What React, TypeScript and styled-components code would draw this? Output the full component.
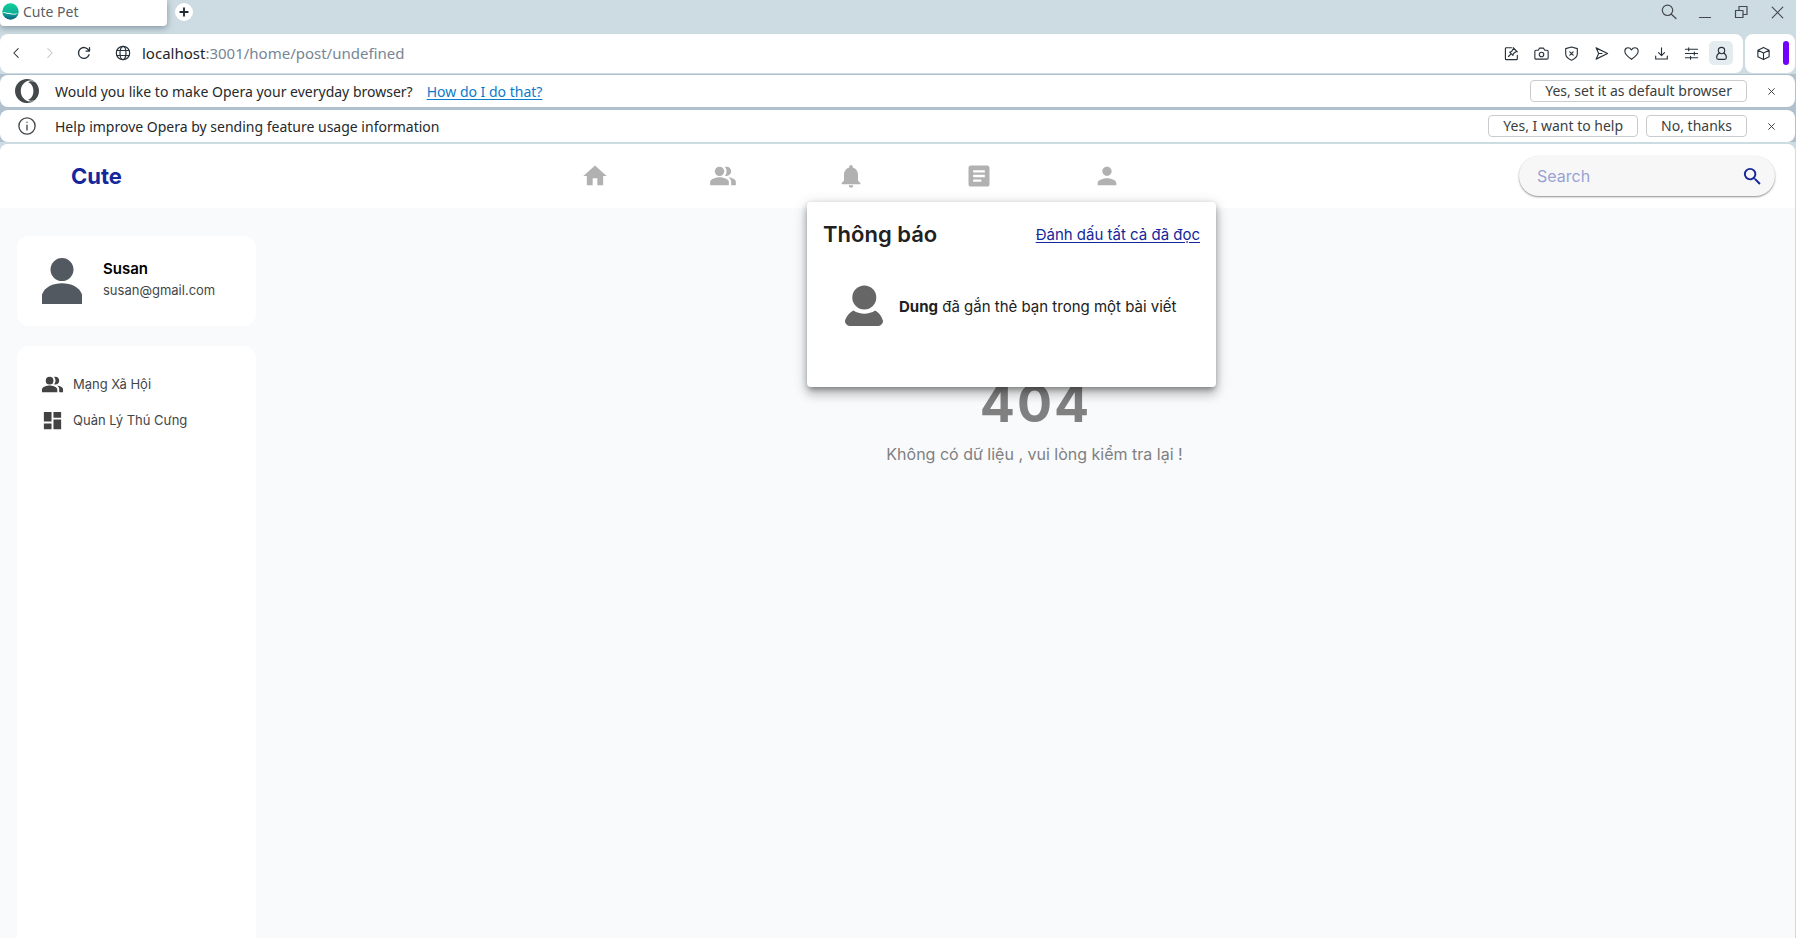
import React from "react";
import styled, { createGlobalStyle, css } from "styled-components";
import {
  MdArticle,
  MdDashboard,
  MdHome,
  MdNotifications,
  MdPeopleAlt,
  MdPerson,
  MdSearch,
} from "react-icons/md";

const chromeFont = `"Noto Sans", "Open Sans", sans-serif`;
const pageFont = `Inter, "Noto Sans", sans-serif`;

const GlobalStyle = createGlobalStyle`
  *, *::before, *::after { box-sizing: border-box; }
  body { margin: 0; background: #cddbe2; }
  button, input { font: inherit; }
  h1, h2, p, ul { margin: 0; padding: 0; }
  ul { list-style: none; }
`;

const Window = styled.div`
  display: flex;
  flex-direction: column;
  min-height: 100vh;
  background: #cddbe2;
  font-family: ${chromeFont};
`;

/* ---------- browser chrome ---------- */

const TabStrip = styled.div`
  display: flex;
  align-items: flex-start;
  height: 34px;
`;

const Tab = styled.div`
  display: flex;
  align-items: center;
  gap: 4px;
  width: 167px;
  height: 26px;
  padding: 0 2px 3px;
  background: #fff;
  border-radius: 0 0 4px 4px;
  box-shadow: 0 2px 6px rgba(60, 80, 95, 0.5);
  color: #5b5f63;
  font-size: 14px;
`;

const NewTab = styled.button`
  display: flex;
  align-items: center;
  justify-content: center;
  width: 18px;
  height: 18px;
  margin: 3px 0 0 8px;
  padding: 0;
  border: 0;
  border-radius: 50%;
  background: #fff;
  color: #202b33;
`;

const WindowControls = styled.div`
  display: flex;
  margin: 0 1px 0 auto;
  height: 24px;
`;

const ControlButton = styled.button`
  display: flex;
  align-items: center;
  justify-content: center;
  width: 36px;
  padding: 0;
  border: 0;
  background: none;
  color: #42484d;
`;

const ToolbarRow = styled.div`
  display: flex;
  gap: 2px;
  padding-right: 1px;
  margin-bottom: 1px;
`;

const Toolbar = styled.div<{ $grow?: boolean }>`
  display: flex;
  align-items: center;
  height: 39px;
  background: #fff;
  border-radius: 8px;
  ${(p) =>
    p.$grow
      ? css`
          flex: 1;
          padding: 0 7px 1px 1px;
        `
      : css`
          gap: 5px;
          padding: 0 6px 1px 3px;
        `}
`;

const ToolButton = styled.button<{ $faded?: boolean; $active?: boolean }>`
  display: flex;
  align-items: center;
  justify-content: center;
  width: ${(p) => (p.$active ? 24 : 30)}px;
  height: 24px;
  margin: ${(p) => (p.$active ? "0 3px" : "0")};
  padding: 0;
  border: 0;
  border-radius: 5px;
  background: ${(p) => (p.$active ? "#e4ecf0" : "none")};
  color: ${(p) => (p.$faded ? "#c3c7ca" : "#27313a")};
`;

const NavButtons = styled.div`
  display: flex;
  gap: 4px;
  padding-right: 9px;
`;

const Address = styled.input`
  width: 100%;
  height: 24px;
  padding: 0;
  border: 0;
  outline: 0;
  background: none;
  color: #768694;
  font-size: 15px;
`;

const AddressBox = styled.label`
  display: flex;
  align-items: center;
  flex: 1;
  min-width: 0;
  font-size: 15px;
  color: #768694;
`;

const Host = styled.span`
  margin-left: 4px;
  color: #1f2529;
`;

const SideHandle = styled.span`
  width: 6px;
  height: 24px;
  border-radius: 3px;
  background: #7300ff;
`;

const InfoBars = styled.div`
  display: flex;
  flex-direction: column;
  gap: 3px;
  padding: 1px 1px 0 0;
  margin-bottom: 2px;
  background: #b0c1cd;
`;

const InfoBar = styled.div`
  display: flex;
  align-items: center;
  gap: 8px;
  height: 32px;
  padding: 0 12px 0 15px;
  background: #fff;
  border-radius: 8px;
  color: #25292c;
  font-size: 14px;
`;

const InfoIcon = styled.span`
  display: flex;
  justify-content: center;
  width: 24px;
  margin-right: 8px;
  color: #43484a;
`;

const InfoText = styled.p`
  flex: 1;
`;

const InfoLink = styled.a`
  margin-left: 14px;
  color: #0b7bcb;
  text-underline-offset: 2px;
`;

const InfoButton = styled.button`
  height: 22px;
  padding: 0 14px;
  border: 1px solid #c8cccf;
  border-radius: 4px;
  background: #fff;
  color: #3a3e41;
  font-size: 14px;
  line-height: 18px;
`;

const DismissButton = styled.button`
  display: flex;
  align-items: center;
  justify-content: center;
  width: 24px;
  height: 24px;
  margin-left: 4px;
  padding: 0;
  border: 0;
  background: none;
  color: #3a3e41;
`;

/* ---------- site ---------- */

const Site = styled.div`
  display: flex;
  flex: 1;
  flex-direction: column;
  margin-right: 1px;
  overflow: hidden;
  border-radius: 8px 8px 0 0;
  background: #f9fafc;
  font-family: ${pageFont};
`;

const Header = styled.header`
  display: grid;
  grid-template-columns: 1fr 640px 1.175fr;
  align-items: center;
  height: 64px;
  background: #fff;
`;

const Brand = styled.a`
  padding-left: 71px;
  color: #14279b;
  font-size: 22px;
  font-weight: 700;
  text-decoration: none;
`;

const Nav = styled.nav`
  display: flex;
`;

const NavItem = styled.div`
  position: relative;
  flex: 1;
`;

const NavButton = styled.button`
  display: flex;
  align-items: center;
  justify-content: center;
  width: 100%;
  height: 64px;
  padding: 0;
  border: 0;
  background: none;
  color: #b1b1b1;
  font-size: 28px;
`;

const SearchBox = styled.label`
  display: flex;
  align-items: center;
  justify-self: end;
  width: 256px;
  height: 40px;
  margin-right: 20px;
  padding: 0 11px 0 18px;
  border-radius: 20px;
  background: #f7f7f7;
  box-shadow: 0 1px 2px rgba(0, 0, 0, 0.45);
  color: #14279b;
  font-size: 23px;
`;

const SearchInput = styled.input`
  flex: 1;
  min-width: 0;
  padding: 0;
  border: 0;
  outline: 0;
  background: none;
  color: #14279b;
  font-size: 16px;
  &::placeholder {
    color: #98a2d3;
    opacity: 1;
  }
`;

const Popover = styled.section`
  position: absolute;
  z-index: 2;
  top: 58px;
  left: 20px;
  width: 409px;
  padding: 16px 16px 61px;
  border-radius: 4px;
  background: #fff;
  box-shadow:
    0 5px 5px -3px rgba(0, 0, 0, 0.2),
    0 8px 10px 1px rgba(0, 0, 0, 0.14),
    0 3px 14px 2px rgba(0, 0, 0, 0.12),
    0 2px 6px rgba(0, 0, 0, 0.2);
  color: #212121;
  font-size: 15px;
`;

const PopoverHead = styled.div`
  display: flex;
  align-items: center;
  justify-content: space-between;
  height: 32px;
  margin-bottom: 36px;
`;

const PopoverTitle = styled.h2`
  font-size: 22px;
  font-weight: 600;
`;

const MarkRead = styled.a`
  color: #14279b;
  text-underline-offset: 2px;
`;

const Notice = styled.div`
  display: flex;
  align-items: center;
  gap: 16px;
  height: 40px;
  padding-left: 22px;
  white-space: nowrap;
  strong {
    font-weight: 700;
  }
`;

const Body = styled.div`
  display: flex;
  flex: 1;
  gap: 18px;
  padding: 28px 0 0 17px;
`;

const Sidebar = styled.aside`
  display: flex;
  flex-direction: column;
  gap: 20px;
  width: 239px;
`;

const ProfileCard = styled.div`
  display: flex;
  align-items: center;
  gap: 20px;
  height: 90px;
  padding: 0 24px;
  border-radius: 12px;
  background: #fff;
`;

const ProfileText = styled.div`
  padding-bottom: 4px;
`;

const ProfileName = styled.p`
  color: #000;
  font-size: 15px;
  font-weight: 600;
  line-height: 22px;
`;

const ProfileMail = styled.p`
  color: #43464a;
  font-size: 13px;
  line-height: 20px;
`;

const MenuCard = styled.ul`
  flex: 1;
  padding: 20px 24px;
  border-radius: 12px 12px 0 0;
  background: #fff;
`;

const MenuLink = styled.a`
  display: flex;
  align-items: center;
  gap: 9px;
  height: 36px;
  color: #43464a;
  font-size: 13px;
  text-decoration: none;
  svg {
    color: #424242;
    font-size: 23px;
  }
`;

const Empty = styled.main`
  flex: 1;
  padding-top: 138px;
  color: #808080;
  text-align: center;
`;

const EmptyCode = styled.h1`
  padding-left: 2px;
  font-size: 52px;
  font-weight: 700;
  letter-spacing: 2px;
  line-height: 60px;
`;

const EmptyText = styled.p`
  margin-top: 8px;
  font-size: 16px;
  line-height: 24px;
`;

/* ---------- drawings ---------- */

function Line({ children, size = 16, w = 1.2 }: { children: React.ReactNode; size?: number; w?: number }) {
  return (
    <svg
      width={size}
      height={size}
      viewBox="0 0 16 16"
      fill="none"
      stroke="currentColor"
      strokeWidth={w}
      strokeLinecap="round"
      strokeLinejoin="round"
      aria-hidden="true"
    >
      {children}
    </svg>
  );
}

const Favicon = () => (
  <svg width="17" height="17" viewBox="0 0 17 17" aria-hidden="true">
    <defs>
      <linearGradient id="fav" x1="0" y1="0" x2="0" y2="1">
        <stop offset="0" stopColor="#10cf9c" />
        <stop offset=".55" stopColor="#0fb096" />
        <stop offset="1" stopColor="#0b5f80" />
      </linearGradient>
    </defs>
    <circle cx="8.5" cy="8.5" r="8.2" fill="url(#fav)" />
    <path
      d="M.6 9.500c2-1.400 3.500.6 5.500.4 2.300-.2 3 .8 5 .9 2 .1 3.400-.3 5-.2-1.600.9-3.400 1.300-5.300 1-2.200-.3-3-.8-4.700-.7C4 11 2.500 9.300.6 9.500z"
      fill="#e6fffa"
    />
  </svg>
);

const OperaLogo = () => (
  <svg width="24" height="24" viewBox="0 0 24 24" fill="currentColor" aria-hidden="true">
    <path d="M8.051 5.238c-1.328 1.566-2.186 3.883-2.246 6.480v.564c.061 2.598.918 4.912 2.246 6.479 1.721 2.236 4.279 3.654 7.139 3.654 1.756 0 3.400-.537 4.807-1.471C17.879 22.846 15.074 24 12 24c-.192 0-.383-.004-.57-.014C5.064 23.689 0 18.436 0 12 0 5.371 5.373 0 12 0h.045c3.055.012 5.840 1.166 7.953 3.055-1.408-.93-3.051-1.471-4.810-1.471-2.858 0-5.417 1.420-7.140 3.654h.003z" />
    <path d="M24 12c0 3.556-1.545 6.748-4.002 8.945-3.078 1.500-5.946.451-6.896-.205 3.023-.664 5.307-4.320 5.307-8.740 0-4.422-2.283-8.075-5.307-8.740.949-.654 3.818-1.703 6.896-.205C22.455 5.250 24 8.445 24 12z" />
  </svg>
);

const Globe = () => (
  <Line>
    <circle cx="8" cy="8" r="6.7" />
    <ellipse cx="8" cy="8" rx="3" ry="6.7" />
    <path d="M2 5.500h12M2 10.500h12" />
  </Line>
);

const tools: { label: string; art: React.ReactNode; active?: boolean }[] = [
  {
    label: "Edit page",
    art: (
      <path d="M8 1.800H2.500a1 1 0 0 0-1 1v10.700a1 1 0 0 0 1 1h10.700a1 1 0 0 0 1-1V10M4.800 11.200l2.700-2.700M6 6.600l3.500 3.500.6-2.200 3.400-2.200-3.200-3.200-2.200 3.400zM9.800 1.800l4.400 4.400" />
    ),
  },
  {
    label: "Snapshot",
    art: (
      <>
        <path d="M2.200 4.500h2.300L6 2.200h4l1.500 2.300h2.300a1.300 1.300 0 0 1 1.300 1.300v6.900a1.300 1.300 0 0 1-1.300 1.300H2.200a1.300 1.300 0 0 1-1.300-1.300V5.800a1.300 1.300 0 0 1 1.300-1.300z" />
        <circle cx="8" cy="9" r="2.4" />
      </>
    ),
  },
  {
    label: "Ad blocker",
    art: <path d="M8 1 1.800 2.800v5.400c0 3.500 2.800 5.500 6.200 7 3.400-1.500 6.200-3.500 6.200-7V2.800zM6.200 6.200l3.600 3.600M9.800 6.200 6.200 9.800" />,
  },
  { label: "Send", art: <path d="M2.200 2 14.500 8 2.200 14 5 8zM5 8h3.500" /> },
  {
    label: "Add to bookmarks",
    art: (
      <path d="M8 14.200C4.400 11.700 .9 9 .9 5.600 .9 3.400 2.500 1.900 4.500 1.900 6 1.900 7.300 2.900 8 4.200 8.700 2.900 10 1.900 11.500 1.900c2 0 3.600 1.500 3.600 3.700C15.100 9 11.600 11.700 8 14.200z" />
    ),
  },
  { label: "Downloads", art: <path d="M8 2v8M4.800 7 8 10.200 11.200 7M1.800 10.800v3h12.400v-3" /> },
  { label: "Easy setup", art: <path d="M1.500 3.500h13M1.500 8h13M1.500 12.500h13M5 2v3M11 6.500v3M7 11v3" /> },
  {
    label: "Profile",
    active: true,
    art: (
      <>
        <circle cx="8" cy="4.8" r="3.4" />
        <path d="M5.600 7.400C3.600 8.500 2.800 10 2.800 12.200c0 1.300.8 2 2 2h6.400c1.200 0 2-.7 2-2 0-2.200-.8-3.700-2.800-4.800" />
      </>
    ),
  },
];

const nav = [
  { label: "Trang chủ", icon: <MdHome /> },
  { label: "Bạn bè", icon: <MdPeopleAlt /> },
  { label: "Thông báo", icon: <MdNotifications />, popover: true },
  { label: "Bài viết", icon: <MdArticle /> },
  { label: "Tài khoản", icon: <MdPerson /> },
];

const Cross = ({ size = 7 }: { size?: number }) => (
  <Line size={size} w={size > 10 ? 1.4 : 2.2}>
    <path d="M1.500 1.500l13 13M14.500 1.500l-13 13" />
  </Line>
);

function BrowserChrome() {
  return (
    <>
      <TabStrip>
        <Tab>
          <Favicon />
          Cute Pet
        </Tab>
        <NewTab aria-label="New tab">
          <Line size={10} w={3}>
            <path d="M8 2v12M2 8h12" />
          </Line>
        </NewTab>
        <WindowControls>
          <ControlButton aria-label="Search tabs">
            <Line>
              <circle cx="6.5" cy="6.3" r="5.2" />
              <path d="m10.400 10.200 4.600 4.300" />
            </Line>
          </ControlButton>
          <ControlButton aria-label="Minimize">
            <Line>
              <path d="M2.500 13.500h11" />
            </Line>
          </ControlButton>
          <ControlButton aria-label="Restore">
            <Line>
              <path d="M2.500 6.500h7.500v7h-7.500zM6 6.500v-4h8v8h-4" />
            </Line>
          </ControlButton>
          <ControlButton aria-label="Close window">
            <Cross size={13} />
          </ControlButton>
        </WindowControls>
      </TabStrip>
      <ToolbarRow>
        <Toolbar $grow>
          <NavButtons>
            <ToolButton aria-label="Back">
              <Line size={14}>
                <path d="M10.500 3 5.500 8l5 5" />
              </Line>
            </ToolButton>
            <ToolButton aria-label="Forward" $faded>
              <Line size={14}>
                <path d="m5.500 3 5 5-5 5" />
              </Line>
            </ToolButton>
            <ToolButton aria-label="Reload">
              <Line size={14} w={1.5}>
                <path d="M13.800 10A6.200 6.200 0 1 1 13.300 4.800M14.300 1.800v4h-4" />
              </Line>
            </ToolButton>
          </NavButtons>
          <ToolButton aria-label="Site information">
            <Globe />
          </ToolButton>
          <AddressBox>
            <Host>localhost</Host>
            <Address aria-label="Address" defaultValue=":3001/home/post/undefined" />
          </AddressBox>
          {tools.map((t) => (
            <ToolButton key={t.label} aria-label={t.label} $active={t.active}>
              <Line size={15}>{t.art}</Line>
            </ToolButton>
          ))}
        </Toolbar>
        <Toolbar>
          <ToolButton aria-label="Extensions">
            <Line size={15}>
              <path d="M8 1.500 14 4.500v7L8 14.500 2 11.500v-7zM2 4.500l6 3 6-3M8 7.500v7" />
            </Line>
          </ToolButton>
          <SideHandle />
        </Toolbar>
      </ToolbarRow>
      <InfoBars>
        <InfoBar>
          <InfoIcon>
            <OperaLogo />
          </InfoIcon>
          <InfoText>
            Would you like to make Opera your everyday browser?
            <InfoLink href="#default">How do I do that?</InfoLink>
          </InfoText>
          <InfoButton>Yes, set it as default browser</InfoButton>
          <DismissButton aria-label="Dismiss">
            <Cross />
          </DismissButton>
        </InfoBar>
        <InfoBar>
          <InfoIcon>
            <Line size={18}>
              <circle cx="8" cy="8" r="7.2" />
              <path d="M8 7.200v4.300M8 4.500v.2" />
            </Line>
          </InfoIcon>
          <InfoText>Help improve Opera by sending feature usage information</InfoText>
          <InfoButton>Yes, I want to help</InfoButton>
          <InfoButton>No, thanks</InfoButton>
          <DismissButton aria-label="Dismiss">
            <Cross />
          </DismissButton>
        </InfoBar>
      </InfoBars>
    </>
  );
}

function Notifications() {
  return (
    <Popover aria-label="Thông báo">
      <PopoverHead>
        <PopoverTitle>Thông báo</PopoverTitle>
        <MarkRead href="#read">Đánh dấu tất cả đã đọc</MarkRead>
      </PopoverHead>
      <Notice>
        <svg width="38" height="42" viewBox="0 0 38 42" fill="#666" aria-hidden="true">
          <circle cx="19.3" cy="12.5" r="12" />
          <path d="M8.500 25.500c6 4.200 15.600 4.200 21.600 0 3.600 1.800 6.600 5.700 7.900 10.300.2 2.200-1.500 4.800-4.600 5.200H4.600C1.500 40.600-.2 38 0 35.800c1.300-4.600 4.900-8.500 8.500-10.300z" />
        </svg>
        <p>
          <strong>Dung</strong> đã gắn thẻ bạn trong một bài viết
        </p>
      </Notice>
    </Popover>
  );
}

export default function App() {
  return (
    <Window>
      <GlobalStyle />
      <BrowserChrome />
      <Site>
        <Header>
          <Brand href="#home">Cute</Brand>
          <Nav>
            {nav.map((item) => (
              <NavItem key={item.label}>
                <NavButton aria-label={item.label}>{item.icon}</NavButton>
                {item.popover && <Notifications />}
              </NavItem>
            ))}
          </Nav>
          <SearchBox>
            <SearchInput type="text" placeholder="Search" aria-label="Search" />
            <MdSearch />
          </SearchBox>
        </Header>
        <Body>
          <Sidebar>
            <ProfileCard>
              <svg width="42" height="46" viewBox="0 0 42 46" fill="#535961" aria-hidden="true">
                <circle cx="21" cy="11.6" r="11.5" />
                <path d="M1 46V36.500C3.500 29 12 25.200 21 25.200S38.500 29 41 36.500V46z" />
              </svg>
              <ProfileText>
                <ProfileName>Susan</ProfileName>
                <ProfileMail>susan@gmail.com</ProfileMail>
              </ProfileText>
            </ProfileCard>
            <MenuCard>
              <li>
                <MenuLink href="#social">
                  <MdPeopleAlt />
                  Mạng Xã Hội
                </MenuLink>
              </li>
              <li>
                <MenuLink href="#pets">
                  <MdDashboard />
                  Quản Lý Thú Cưng
                </MenuLink>
              </li>
            </MenuCard>
          </Sidebar>
          <Empty>
            <EmptyCode>404</EmptyCode>
            <EmptyText>Không có dữ liệu , vui lòng kiểm tra lại !</EmptyText>
          </Empty>
        </Body>
      </Site>
    </Window>
  );
}
